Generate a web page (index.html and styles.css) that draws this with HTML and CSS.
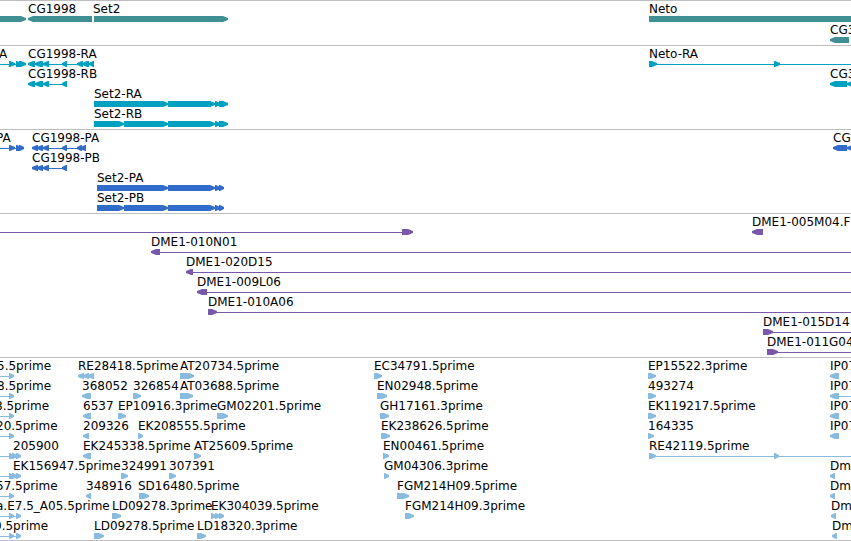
FILE: index.html
```html
<!DOCTYPE html>
<html lang="en">
<head>
    <meta charset="UTF-8">
    <title>Genome tracks</title>
    <link rel="stylesheet" href="styles.css">
</head>
<body class="page">
<main class="tracks" id="tracks"></main>
<script src="tracks.js"></script>
</body>
</html>
```

FILE: styles.css
```css
.page {
    margin: 0;
    background: #fff;
    color: #000;
    font-family: "DejaVu Sans", sans-serif;
    font-size: 12px;
    line-height: 12px;
}

.tracks {
    overflow: hidden;
    border-bottom: 1px solid #bebebe;
}

.track {
    display: grid;
    gap: 2px;
    padding: 3px 0 2px;
    border-top: 1px solid #bebebe;
}

.track:last-child {
    padding-bottom: 1px;
}

.track-gene {
    gap: 3px;
    color: #408f94;
}

.track-transcript {
    color: #00a0c0;
}

.track-protein {
    color: #316ccb;
}

.track-bac {
    color: #7859a9;
}

.track-est {
    color: #88bbdd;
}

.labels {
    position: relative;
    height: 12px;
    color: #000;
}

.label {
    position: absolute;
    top: -1px;
    white-space: nowrap;
}

.glyphs {
    display: block;
    width: 100%;
    height: 6px;
    fill: currentColor;
}
```

FILE: tracks.js
```js
var SVG = 'http://www.w3.org/2000/svg';
var END = 9999; // feature runs past the right edge

// feature: [name, label x, strand, exons, line start, line end]
var tracks = [
    {
        type: 'gene',
        rows: [
            [
                ['', 0, 1, [[-20, 26]]],
                ['CG1998', 28, -1, [[28, 92]]],
                ['Set2', 93, 1, [[94, 228]]],
                ['Neto', 649, 1, [[649, END]]]
            ],
            [['CG3', 830, -1, [[830, 849]]]]
        ]
    },
    {
        type: 'transcript',
        rows: [
            [
                ['A', -1, 1, [[9, 15], [16, 21], [19, 26]], -10],
                ['CG1998-RA', 28, -1, [[28, 35], [35, 43], [43, 49], [62, 67], [77, 83], [82, 89], [89, 94]]],
                ['Neto-RA', 649, 1, [[649, 657], [774, 780]], 649, END]
            ],
            [
                ['CG1998-RB', 28, -1, [[28, 35], [35, 43], [43, 49], [62, 67]]],
                ['CG3', 830, -1, [[830, 847], [847, 855]]]
            ],
            [['Set2-RA', 94, 1, [[94, 168], [168, 215], [215, 220], [219, 228]]]],
            [['Set2-RB', 94, 1, [[94, 124], [124, 168], [168, 215], [215, 220], [219, 228]]]]
        ]
    },
    {
        type: 'protein',
        rows: [
            [
                ['PA', -4, 1, [[9, 15], [16, 21], [19, 24]], -10],
                ['CG1998-PA', 32, -1, [[32, 38], [37, 43], [43, 49], [62, 67], [77, 82], [81, 86]]],
                ['CG', 833, -1, [[833, 847], [847, 855]]]
            ],
            [['CG1998-PB', 32, -1, [[32, 38], [37, 43], [43, 49], [62, 67]]]],
            [['Set2-PA', 97, 1, [[97, 168], [168, 215], [215, 220], [219, 224]]]],
            [['Set2-PB', 97, 1, [[97, 124], [124, 168], [168, 215], [215, 220], [219, 224]]]]
        ]
    },
    {
        type: 'bac',
        rows: [
            [
                ['', 0, 1, [[402, 413]], -10],
                ['DME1-005M04.F', 752, -1, [[752, 763]]]
            ],
            [['DME1-010N01', 151, -1, [[151, 160]], 151, END]],
            [['DME1-020D15', 186, -1, [[186, 193]], 186, END]],
            [['DME1-009L06', 197, -1, [[197, 207]], 197, END]],
            [['DME1-010A06', 208, 1, [[208, 217]], 208, END]],
            [['DME1-015D14', 763, 1, [[763, 773]], 763, END]],
            [['DME1-011G04', 767, 1, [[767, 778]], 767, END]]
        ]
    },
    {
        type: 'est',
        rows: [
            [
                ['5.5prime', -3, 1, [[9, 14]], -10],
                ['RE28418.5prime', 78, -1, [[78, 84], [83, 89], [88, 94]]],
                ['AT20734.5prime', 180, 1, [[180, 194]]],
                ['EC34791.5prime', 374, 1, [[374, 382]]],
                ['EP15522.3prime', 648, 1, [[648, 656]]],
                ['IP07', 830, -1, [[830, 839]]]
            ],
            [
                ['8.5prime', -3, 1, [[9, 14]], -10],
                ['368052', 82, -1, [[82, 91]]],
                ['326854', 133, 1, [[133, 141]]],
                ['AT03688.5prime', 180, 1, [[180, 193]]],
                ['EN02948.5prime', 377, 1, [[377, 387]]],
                ['493274', 648, 1, [[648, 656]]],
                ['IP07', 830, -1, [[830, 839]], 830, END]
            ],
            [
                ['8.5prime', -5, 1, [[9, 14]], -10],
                ['6537', 83, -1, [[83, 91]]],
                ['EP10916.3prime', 118, 1, [[118, 126]]],
                ['GM02201.5prime', 217, 1, [[217, 228]]],
                ['GH17161.3prime', 380, 1, [[380, 389]]],
                ['EK119217.5prime', 648, 1, [[648, 656]]],
                ['IP07', 830, -1, [[830, 839]]]
            ],
            [
                ['20.5prime', -4, 1, [[9, 14]], -10],
                ['209326', 83, -1, [[83, 89]]],
                ['EK208555.5prime', 138, 1, [[138, 143]]],
                ['EK238626.5prime', 381, 1, [[381, 390]]],
                ['164335', 648, 1, [[648, 654]]],
                ['IP07', 830, -1, [[830, 839]]]
            ],
            [
                ['205900', 13, 1, [[9, 14], [12, 17], [16, 21]], -10],
                ['EK245338.5prime', 83, -1, [[83, 91]]],
                ['AT25609.5prime', 194, 1, [[194, 201]]],
                ['EN00461.5prime', 383, 1, [[383, 389]]],
                ['RE42119.5prime', 649, 1, [[649, 656], [774, 779]], 649, END]
            ],
            [
                ['EK156947.5prime', 13, 1, [[9, 14], [12, 17], [16, 21]], -10],
                ['324991', 121, 1, [[121, 128]]],
                ['307391', 169, 1, [[169, 176]]],
                ['GM04306.3prime', 384, 1, [[384, 389]]],
                ['Dm', 830, -1, [[830, 835]]]
            ],
            [
                ['57.5prime', -4, 1, [[9, 14]], -10],
                ['348916', 86, -1, [[86, 91]]],
                ['SD16480.5prime', 138, 1, [[139, 149]]],
                ['FGM214H09.5prime', 397, 1, [[397, 409]]],
                ['Dm', 830, -1, [[830, 835]]]
            ],
            [
                ['a.E7.5_A05.5prime', -4, 1, [[9, 14], [16, 21]], -10],
                ['LD09278.3prime', 112, 1, [[112, 121]]],
                ['EK304039.5prime', 211, 1, [[211, 216], [215, 220], [219, 224]]],
                ['FGM214H09.3prime', 405, 1, [[405, 414]]],
                ['Dm', 831, -1, [[831, 836]]]
            ],
            [
                ['0.5prime', -6, 1, [[9, 14], [16, 21]], -10],
                ['LD09278.5prime', 94, 1, [[94, 104]]],
                ['LD18320.3prime', 197, 1, [[197, 206]]],
                ['Dm', 832, -1, [[832, 837]]]
            ]
        ]
    }
];

// block with a blunt point on the side of the strand
function exonPath(a, b, strand) {
    var tip = Math.min(5, b - a - 1);
    if (strand > 0) {
        return 'M' + a + ' 0H' + (b - tip) + 'L' + b + ' 2v2L' + (b - tip) + ' 6H' + a + 'z';
    }
    return 'M' + b + ' 0v6H' + (a + tip) + 'L' + a + ' 4v-2L' + (a + tip) + ' 0z';
}

function drawRow(features) {
    var row = document.createElement('div');
    var labels = document.createElement('div');
    var svg = document.createElementNS(SVG, 'svg');

    row.className = 'row';
    labels.className = 'labels';
    svg.setAttribute('class', 'glyphs');

    features.forEach(function (f) {
        var exons = f[3];
        var start = f[4] === undefined ? exons[0][0] : f[4];
        var end = f[5] === undefined ? exons[exons.length - 1][1] : f[5];
        var path = document.createElementNS(SVG, 'path');
        var d = '';

        if (f[0]) {
            var label = document.createElement('span');
            label.className = 'label';
            label.style.left = f[1] + 'px';
            label.textContent = f[0];
            labels.appendChild(label);
        }

        // line through the introns, wound the same way as the exons
        if (exons.length > 1 || f.length > 4) {
            d += 'M' + start + ' 3H' + end + 'v1H' + start + 'z';
        }
        exons.forEach(function (e) {
            d += exonPath(e[0], e[1], f[2]);
        });
        path.setAttribute('d', d);
        svg.appendChild(path);
    });

    row.appendChild(labels);
    row.appendChild(svg);
    return row;
}

tracks.forEach(function (t) {
    var track = document.createElement('section');
    track.className = 'track track-' + t.type;
    t.rows.forEach(function (features) {
        track.appendChild(drawRow(features));
    });
    document.getElementById('tracks').appendChild(track);
});
```
